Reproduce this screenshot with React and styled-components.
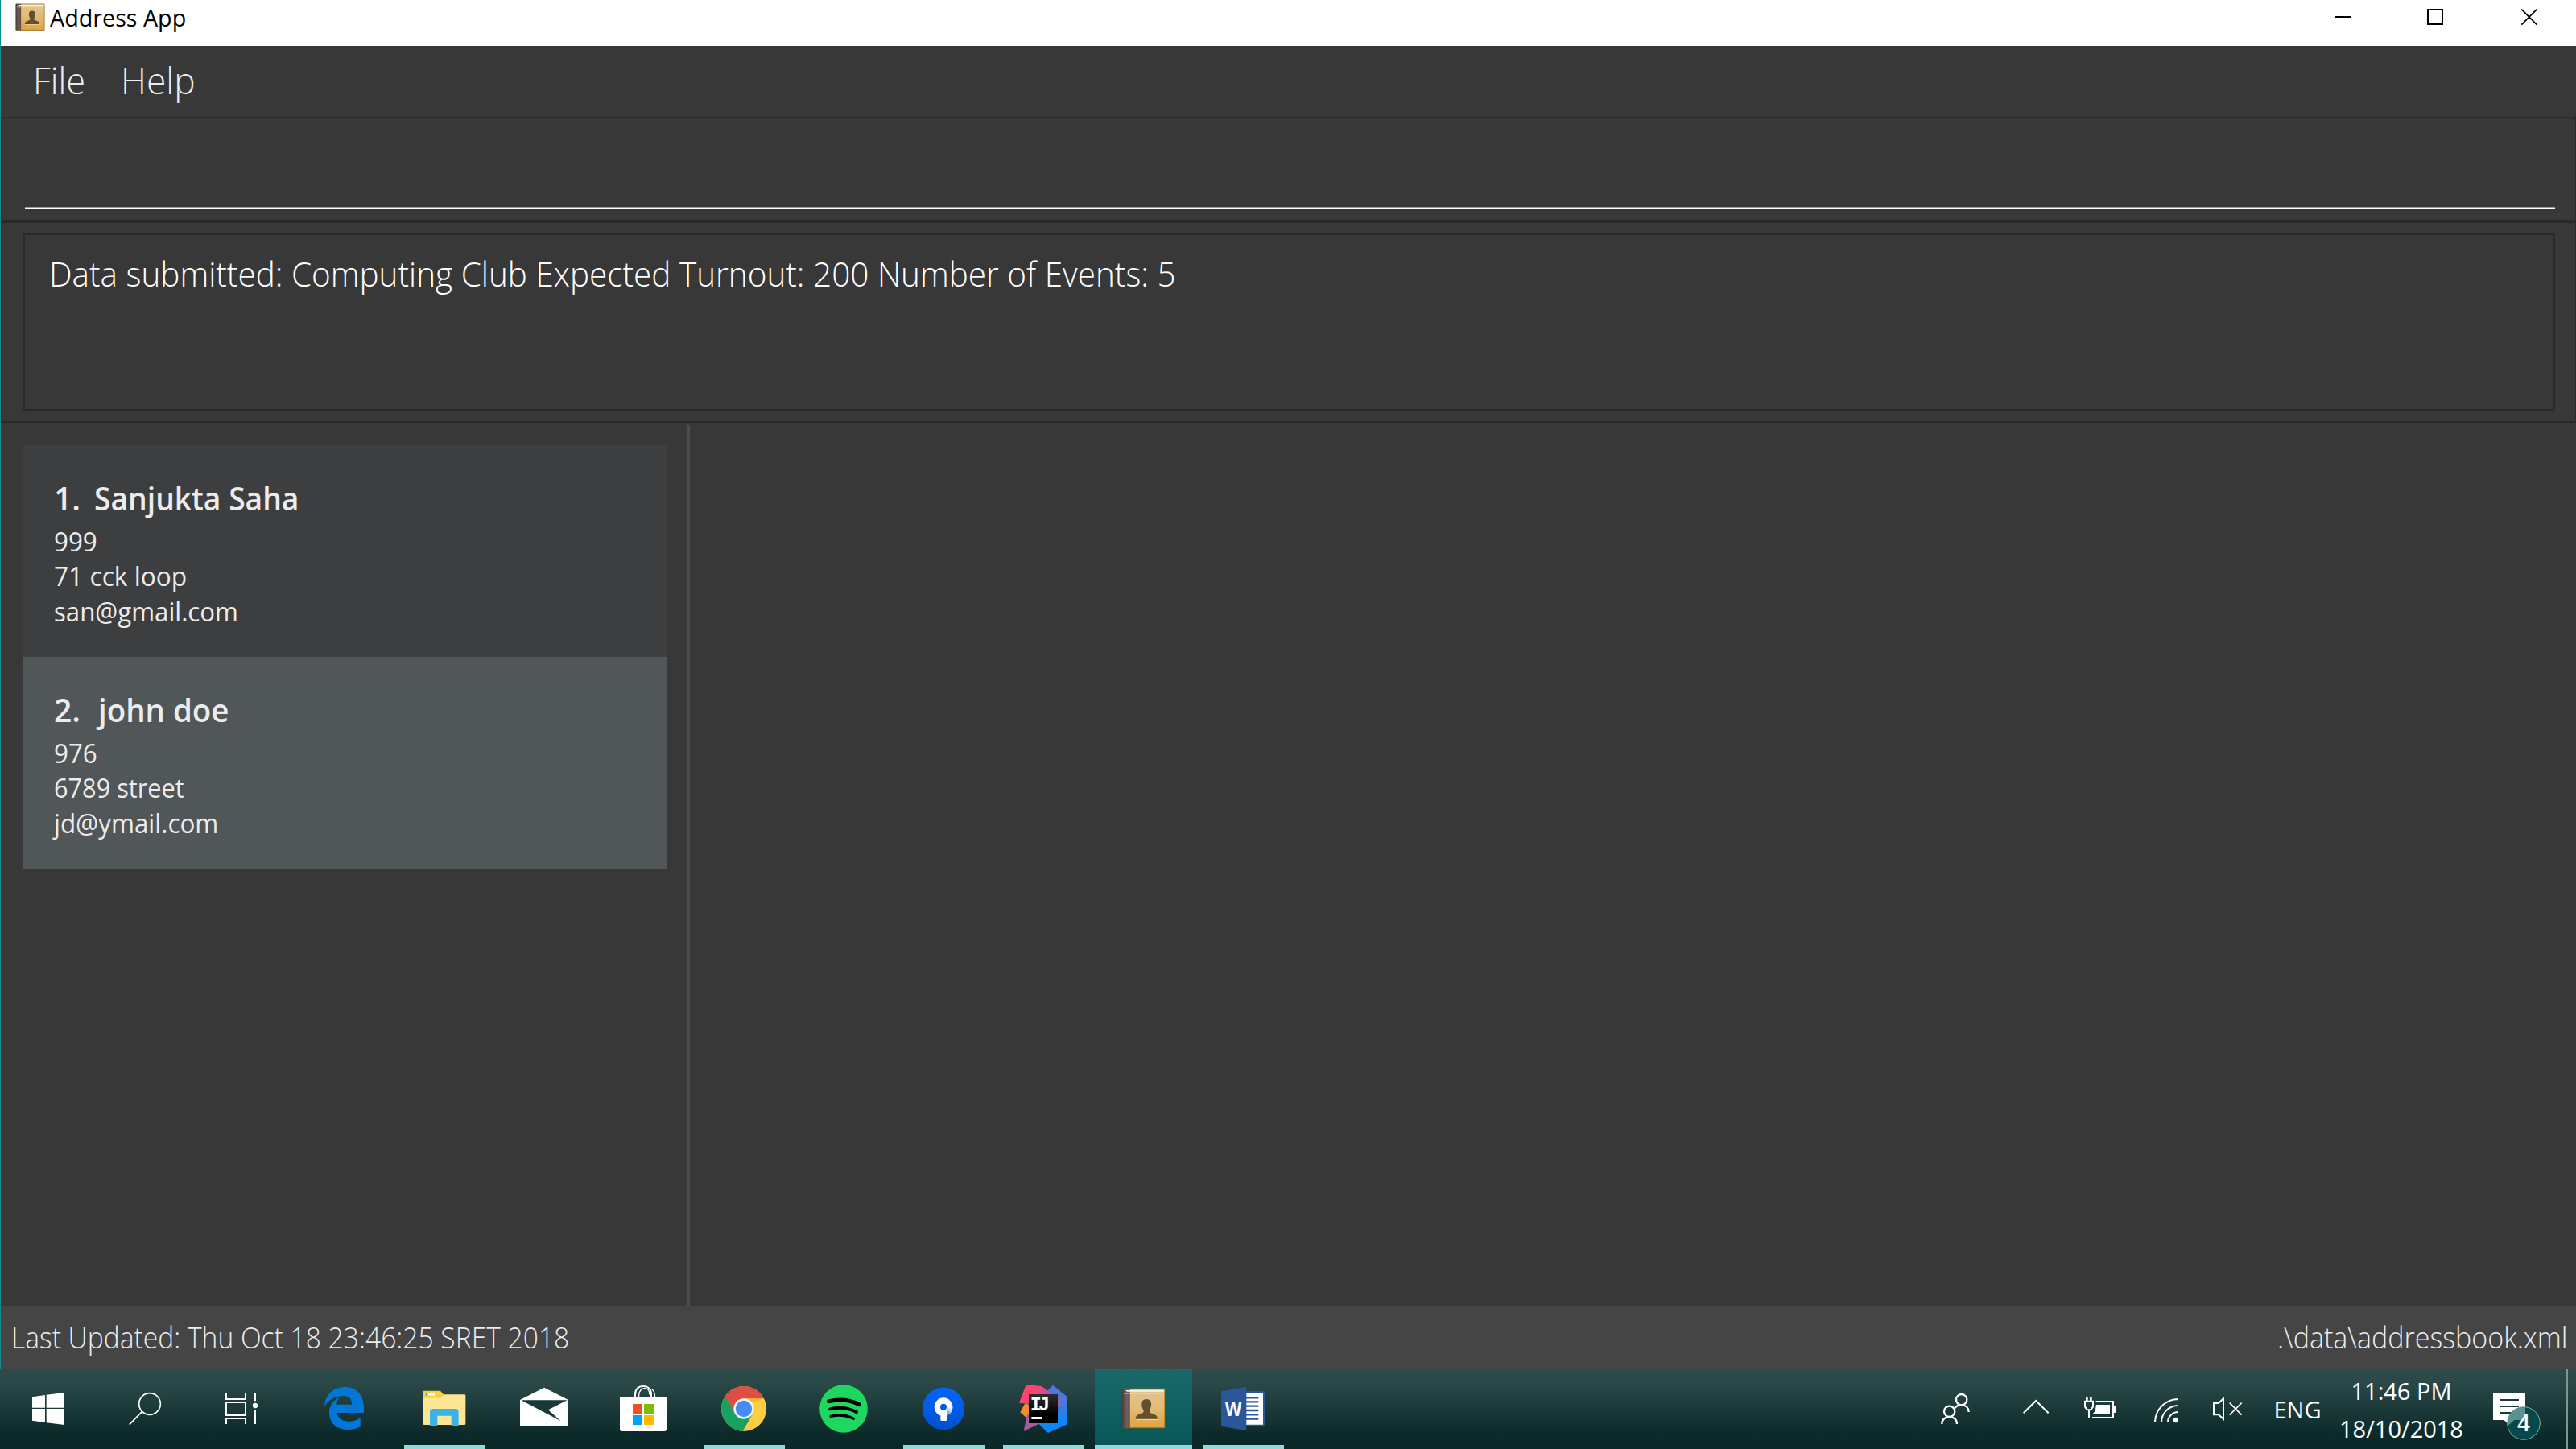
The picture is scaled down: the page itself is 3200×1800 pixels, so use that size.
import React from "react";
import styled, { createGlobalStyle } from "styled-components";

const GlobalStyle = createGlobalStyle`
  * { box-sizing: border-box; }
  body { margin: 0; background: #383838; overflow: hidden; font-family: "Open Sans", "Noto Sans", sans-serif; }
  svg { display: block; }
`;

const Screen = styled.div`
  width: 3200px;
  height: 1800px;
  display: flex;
  flex-direction: column;
`;
const Window = styled.div`
  height: 1700px;
  border-left: 1px solid #138a8c;
  background: #383838;
  display: flex;
  flex-direction: column;
`;
const TitleBar = styled.header`
  height: 57px;
  flex-shrink: 0;
  background: #fff;
  display: flex;
  align-items: flex-start;
  justify-content: space-between;
`;
const TitleGroup = styled.div`
  display: flex;
  padding: 4px 0 0 18px;
  gap: 6px;
`;
const Text = styled.span`
  display: block;
  white-space: pre;
  font-size: ${(p) => p.$size}px;
  line-height: ${(p) => p.$line}px;
  font-weight: ${(p) => p.$weight || 400};
  color: ${(p) => p.$color || "#fff"};
  transform: ${(p) => (p.$squeeze ? `scaleX(${p.$squeeze})` : "none")};
  transform-origin: ${(p) => p.$origin || "left"} center;
`;
const WindowButtons = styled.div`
  display: flex;
`;
const MenuBar = styled.nav`
  height: 88px;
  flex-shrink: 0;
  display: flex;
  gap: 40px;
  padding: 12px 0 0 40px;
`;
const Pane = styled.section`
  height: ${(p) => p.$height}px;
  flex-shrink: 0;
  border: 2px solid #292929;
  border-right-width: 1px;
  padding: ${(p) => p.$pad};
`;
const CommandField = styled.div`
  height: 113px;
  border-bottom: 2px solid #fff;
  box-shadow: inset 0 -1px #999;
`;
const ResultBox = styled.div`
  height: 220px;
  border: 2px solid #292929;
  padding: 18px 30px;
`;
const Main = styled.main`
  flex: 1;
  min-height: 0;
  display: flex;
`;
const ListPane = styled.aside`
  width: 853px;
  padding: 28px 25px 0 28px;
`;
const Divider = styled.div`
  width: 3px;
  margin-top: 3px;
  background: #4d4d4d;
`;
const Card = styled.article`
  height: 263px;
  padding: 39px 0 0 38px;
  background: ${(p) => (p.$alt ? "#515658" : "#3c3e3f")};
`;
const NameRow = styled.div`
  display: flex;
  gap: ${(p) => p.$gap}px;
  margin-bottom: 5px;
`;
const StatusBar = styled.footer`
  height: 78px;
  flex-shrink: 0;
  background: #454545;
  display: flex;
  justify-content: space-between;
  padding: 15px 11px 0 13px;
`;
const Taskbar = styled.div`
  height: 100px;
  background: linear-gradient(#2e4b4b 0%, #2a4747 22%, #1a3838 52%, #0d2b2b 80%, #0a2727 100%);
  display: flex;
  justify-content: space-between;
`;
const Group = styled.div`
  display: flex;
`;
const Slot = styled.div`
  width: ${(p) => p.$w}px;
  height: 100px;
  display: flex;
  flex-direction: column;
  align-items: center;
`;
const AppSlot = styled(Slot)`
  width: ${(p) => (p.$active ? 121 : 101)}px;
  margin: 0 ${(p) => (p.$active ? 1 : 11)}px 0 ${(p) => (p.$active ? 2 : 12)}px;
  border-bottom: 5px solid ${(p) => (p.$open ? "#8ed9da" : "transparent")};
  background: ${(p) => (p.$active ? "linear-gradient(#1b6969, #085757)" : "none")};
  background-clip: padding-box;
`;
const Apps = styled(Group)`
  padding-left: 6px;
`;
const BookHolder = styled.div`
  padding-top: 24px;
`;
const Clock = styled.div`
  width: 156px;
  display: flex;
  flex-direction: column;
  align-items: center;
  padding-top: 4px;
`;
const Lang = styled.div`
  width: 102px;
  display: flex;
  justify-content: center;
  padding-top: 30px;
`;
const ShowDesktop = styled.div`
  width: 13px;
  border-left: 3px solid #829495;
`;

const BookIcon = ({ w, h }) => (
  <svg width={w} height={h} viewBox="517 103 166 156">
    <defs>
      <linearGradient id="cover" x1="0" y1="0" x2="0" y2="1">
        <stop offset="0" stopColor="#e3c592" />
        <stop offset="0.5" stopColor="#e2bb76" />
        <stop offset="1" stopColor="#dda541" />
      </linearGradient>
      <linearGradient id="spine" x1="0" y1="0" x2="1" y2="0">
        <stop offset="0" stopColor="#4b3d3a" />
        <stop offset="0.6" stopColor="#75625e" />
        <stop offset="1" stopColor="#574743" />
      </linearGradient>
    </defs>
    <rect x="519" y="107" width="162" height="150" rx="5" fill="#3a2d17" opacity="0.4" />
    <rect x="520" y="105" width="160" height="149" rx="4" fill="#a87822" />
    <rect x="546" y="108" width="131" height="142" fill="url(#cover)" />
    <rect x="520" y="106" width="29" height="147" rx="4" fill="url(#spine)" />
    <path d="M532 112H676V117H538Z" fill="#f6f1e6" />
    <path d="M526 122H676V126H526Z" fill="#f2dfbd" opacity="0.6" />
    <path d="M572 221H652" stroke="#f3dcae" strokeWidth="3" />
    <path d="M570 219C570 204 582 202 598 196C601 192 600 187 597 182C592 172 592 162 595 153C600 142 621 142 626 153C630 162 629 173 624 182C621 188 621 192 624 196C640 202 652 204 652 219Z" fill="#61502f" />
  </svg>
);

const TaskIcon = ({ x, w, children }) => (
  <svg width={w / 3} height="100" viewBox={`${x} 30 ${w} 300`} overflow="visible">
    {children}
  </svg>
);

const StartIcon = () => (
  <TaskIcon x={0} w={360}>
    <path d="M120 136L168 129V176H120ZM173 128L240 120V176H173ZM120 180H168V231L120 224ZM173 180H240V240L173 232Z" fill="#fff" />
  </TaskIcon>
);
const SearchIcon = () => (
  <TaskIcon x={360} w={360}>
    <g fill="none" stroke="#fff" strokeWidth="5">
      <circle cx="558" cy="162" r="40" />
      <path d="M530 190L482 239" />
    </g>
  </TaskIcon>
);
const TaskViewIcon = () => (
  <TaskIcon x={720} w={360}>
    <g fill="none" stroke="#fff" strokeWidth="6">
      <path d="M843 123V144H915V123M843 156H915V204H843ZM843 237V216H915V237M951 123V151M951 184V237" />
    </g>
    <circle cx="951" cy="168" r="9.5" fill="#fff" />
  </TaskIcon>
);
const EdgeIcon = () => (
  <TaskIcon x={54} w={303}>
    <path d="M129 170C133 130 160 99 207 99C250 99 276 133 276 172V195H176C178 216 197 227 222 227C240 227 254 220 263 213V247C250 254 234 258 215 258C172 258 147 230 147 195C147 170 160 150 184 138C177 146 175 155 175 164H231C232 145 222 132 200 132C170 132 145 145 129 170Z" fill="#0178d9" />
  </TaskIcon>
);
const ExplorerIcon = () => (
  <TaskIcon x={426} w={303}>
    <path d="M500 127H651Q655 127 655 131V236Q655 240 651 240H501Q497 240 497 236V131Z" fill="#ffe693" />
    <path d="M501 113H558Q562 113 564 116L574 128L564 138Q562 140 558 140H497V117Q497 113 501 113Z" fill="#ffce3d" />
    <rect x="507" y="123" width="33" height="8" fill="#fff" />
    <rect x="507" y="123" width="7" height="8" fill="#1ea0e0" />
    <path d="M522 245V191Q522 180 533 180H618Q629 180 629 191V245H602V206H550V245Z" fill="#39b3e8" />
  </TaskIcon>
);
const MailIcon = () => (
  <TaskIcon x={798} w={303}>
    <path d="M858 147L948 101L1038 147V243H858Z" fill="#fff" />
    <path d="M862 148H1034L963 184L1010 226Z" fill="#1a3838" />
  </TaskIcon>
);
const StoreIcon = () => (
  <TaskIcon x={1170} w={303}>
    <g fill="none" stroke="#fff">
      <path d="M1287 140V128C1287 106 1300 96 1317 96C1336 96 1347 108 1347 126V140" strokeWidth="6" />
      <path d="M1301 140V128C1302 112 1312 104 1322 104C1336 104 1341 116 1341 128M1350 108C1358 114 1361 124 1361 140" strokeWidth="4" />
    </g>
    <path d="M1230 138H1404V256Q1404 264 1396 264H1238Q1230 264 1230 256Z" fill="#fff" />
    <path d="M1278 162h36v36h-36z" fill="#f44f24" />
    <path d="M1320 162h36v36h-36z" fill="#80ba01" />
    <path d="M1278 204h36v36h-36z" fill="#02a4f0" />
    <path d="M1320 204h36v36h-36z" fill="#ffb902" />
  </TaskIcon>
);
const ChromeIcon = () => (
  <TaskIcon x={102} w={303}>
    <circle cx="252" cy="180" r="84" fill="#ffcd42" />
    <path d="M182 134A84 84 0 0 0 248 264L288 194L252 180Z" fill="#1aa05f" />
    <path d="M182 134A84 84 0 0 1 327 142H252L216 192Z" fill="#dd4f43" />
    <path d="M252 142H327L284 154Z" fill="#e9ae30" opacity="0.7" />
    <circle cx="252" cy="180" r="38" fill="#f2f4f6" />
    <circle cx="252" cy="180" r="30.5" fill="#4a8af4" />
  </TaskIcon>
);
const SpotifyIcon = () => (
  <TaskIcon x={474} w={303}>
    <circle cx="624" cy="180" r="89.5" fill="#1ed760" />
    <g fill="none" stroke="#000" strokeLinecap="round">
      <path d="M569 152Q630 138 682 164" strokeWidth="15" />
      <path d="M573 181Q625 167 672 192" strokeWidth="12" />
      <path d="M576 208Q620 197 661 217" strokeWidth="10" />
    </g>
  </TaskIcon>
);
const SourcetreeIcon = () => (
  <TaskIcon x={846} w={303}>
    <defs>
      <linearGradient id="stbg" x1="0" y1="0" x2="0" y2="1">
        <stop offset="0" stopColor="#0065ff" />
        <stop offset="1" stopColor="#0250cc" />
      </linearGradient>
      <linearGradient id="stfade" x1="0" y1="1" x2="0.6" y2="0">
        <stop offset="0" stopColor="#3f83ea" />
        <stop offset="1" stopColor="#fff" />
      </linearGradient>
    </defs>
    <circle cx="996" cy="180" r="78.5" fill="url(#stbg)" />
    <circle cx="996" cy="173" r="23" fill="none" stroke="#fff" strokeWidth="22" />
    <path d="M1008 173H1030C1030 190 1022 200 1008 205V184Z" fill="url(#stfade)" />
    <path d="M985 192H1008V221Q1008 225 1004 225H989Q985 225 985 221Z" fill="#fff" />
  </TaskIcon>
);
const IdeaIcon = () => (
  <TaskIcon x={78} w={303}>
    <defs>
      <linearGradient id="ijblue" x1="0.3" y1="0" x2="0.5" y2="1">
        <stop offset="0" stopColor="#5a72d8" />
        <stop offset="0.45" stopColor="#4a78dc" />
        <stop offset="0.8" stopColor="#0e86fb" />
      </linearGradient>
      <linearGradient id="ijpink" x1="0" y1="0" x2="1" y2="0.5">
        <stop offset="0.3" stopColor="#fe4370" />
        <stop offset="1" stopColor="#7a68c4" />
      </linearGradient>
      <linearGradient id="ijblack" x1="0" y1="0" x2="0" y2="1">
        <stop offset="0" stopColor="#2c2c2c" />
        <stop offset="0.7" stopColor="#000" />
      </linearGradient>
    </defs>
    <path d="M160 160L142 193L175 222L190 170Z" fill="#f68c2c" />
    <path d="M168 200L155 264L222 232Z" fill="#a95aa0" />
    <path d="M164 90L221 96L306 152L240 220L200 165L138 158Z" fill="url(#ijpink)" />
    <path d="M264 92L318 136L315 239L246 270L206 232L282 180L300 152L244 112Z" fill="url(#ijblue)" />
    <path d="M174 126H282V234H174Z" fill="url(#ijblack)" />
    <path d="M184 210H224V219H184Z" fill="#fff" />
    <text x="179" y="186" fontFamily="Liberation Mono, monospace" fontWeight="700" fontSize="70" letterSpacing="-11" fill="#fff">IJ</text>
  </TaskIcon>
);
const WordIcon = () => (
  <TaskIcon x={822} w={303}>
    <rect x="960" y="114" width="93" height="131" rx="7" fill="#2b579a" />
    <path d="M970 121H1047V239H970Z" fill="#fff" />
    <path d="M984 139H1030M984 154H1030M984 170H1030M984 186H1030M984 202H1030M984 218H1030" stroke="#2b579a" strokeWidth="7" />
    <path d="M891 115L985 98V262L891 245Z" fill="#2a569a" />
    <text x="905" y="207" fontFamily="Open Sans, sans-serif" fontWeight="700" fontSize="76" textLength="62" lengthAdjust="spacingAndGlyphs" fill="#fff">W</text>
  </TaskIcon>
);
const PeopleIcon = () => (
  <TaskIcon x={27} w={300}>
    <g fill="none" stroke="#fff" strokeWidth="7">
      <circle cx="170" cy="146" r="20" />
      <circle cx="125" cy="190" r="20" />
      <path d="M97 237C97 220 109 210 125 210C141 210 153 220 153 237M143 180C148 171 158 166 170 166C187 166 197 177 197 192" />
    </g>
  </TaskIcon>
);
const ChevronIcon = () => (
  <TaskIcon x={327} w={240}>
    <path d="M401 196L447.5 150L494 196" fill="none" stroke="#fff" strokeWidth="6" />
  </TaskIcon>
);
const BatteryIcon = () => (
  <TaskIcon x={567} w={240}>
    <g fill="none" stroke="#fff" strokeWidth="6">
      <path d="M671 153H735V213H657M645 184V216" />
      <path d="M630 152H660V172L652 184H638L630 172Z" />
    </g>
    <path d="M672 165H723V201H657L668 188ZM738 171H747V195H738Z" fill="#fff" />
    <path d="M633 135H641V150H633ZM648 135H656V150H648Z" fill="#fff" />
  </TaskIcon>
);
const WifiIcon = () => (
  <TaskIcon x={807} w={240}>
    <g fill="none" stroke="#fff" strokeWidth="6">
      <path d="M891 231C891 183 930 144 978 144M915 231C915 196 943 168 978 168M939 231C939 209 956 192 978 192" />
    </g>
    <circle cx="969" cy="222" r="9.5" fill="#fff" />
  </TaskIcon>
);
const VolumeIcon = () => (
  <TaskIcon x={1047} w={222}>
    <g fill="none" stroke="#fff" strokeWidth="6">
      <path d="M1110 159H1128L1146 142V218L1128 202H1110Z" />
      <path d="M1169 158L1214 203M1214 158L1169 203" strokeWidth="5" />
    </g>
  </TaskIcon>
);
const ActionCenterIcon = () => (
  <svg width="126" height="100" viewBox="843 270 378 300">
    <path d="M951 360H1071V462H1020V490L992 462H951Z" fill="#fff" />
    <path d="M975 387H1047M975 411H1047M975 435H1047" stroke="#1c3b3b" strokeWidth="6" />
    <clipPath id="bubble"><path d="M951 360H1071V462H1030L1008 482L992 462H951Z" /></clipPath>
    <circle cx="1065" cy="474" r="61" fill="#05494b" stroke="#8fa5a5" strokeWidth="3" />
    <circle cx="1065" cy="474" r="60" fill="#5c9192" clipPath="url(#bubble)" />
    <text x="1065" y="503" textAnchor="middle" fontFamily="Open Sans, sans-serif" fontWeight="600" fontSize="84" fill="#fff">4</text>
  </svg>
);

const MinimizeIcon = () => (
  <svg width="115" height="57" viewBox="0 0 345 171">
    <path d="M135 63H195" stroke="#000" strokeWidth="6" />
  </svg>
);
const MaximizeIcon = () => (
  <svg width="115" height="57" viewBox="0 0 345 171">
    <rect x="138" y="36" width="54" height="54" fill="none" stroke="#000" strokeWidth="6" />
  </svg>
);
const CloseIcon = () => (
  <svg width="115" height="57" viewBox="0 0 345 171">
    <path d="M142 35L199 92M199 35L142 92" stroke="#000" strokeWidth="5" />
  </svg>
);

const people = [
  {
    n: "1.",
    name: "Sanjukta Saha",
    gap: 17,
    squeeze: 0.955,
    lines: [["999", 0.95], ["71 cck loop", 0.96], ["san@gmail.com", 0.945]],
  },
  {
    n: "2.",
    name: "john doe",
    gap: 22,
    squeeze: 0.985,
    lines: [["976", 0.95], ["6789 street", 0.93], ["jd@ymail.com", 0.95]],
  },
];

const apps = [
  { id: "edge", Icon: EdgeIcon },
  { id: "explorer", Icon: ExplorerIcon, open: true },
  { id: "mail", Icon: MailIcon },
  { id: "store", Icon: StoreIcon },
  { id: "chrome", Icon: ChromeIcon, open: true },
  { id: "spotify", Icon: SpotifyIcon },
  { id: "sourcetree", Icon: SourcetreeIcon, open: true },
  { id: "idea", Icon: IdeaIcon, open: true },
  { id: "book", Icon: null, open: true, active: true },
  { id: "word", Icon: WordIcon, open: true },
];

export default function App() {
  return (
    <Screen>
      <GlobalStyle />
      <Window>
        <TitleBar>
          <TitleGroup>
            <BookIcon w={37} h={35} />
            <Text $size={29} $line={36} $color="#000" $squeeze={0.99}>Address App</Text>
          </TitleGroup>
          <WindowButtons>
            <MinimizeIcon />
            <MaximizeIcon />
            <CloseIcon />
          </WindowButtons>
        </TitleBar>
        <MenuBar>
          <Text $size={46} $line={60} $weight={300} $color="#ececec" $squeeze={0.94}>File</Text>
          <Text $size={46} $line={60} $weight={300} $color="#ececec" $squeeze={0.965}>Help</Text>
        </MenuBar>
        <Pane $height={130} $pad="0 25px 0 28px">
          <CommandField />
        </Pane>
        <Pane $height={250} $pad="13px 25px 0 26px">
          <ResultBox>
            <Text $size={43} $line={60} $weight={300} $squeeze={0.9415}>Data submitted: Computing Club Expected Turnout: 200 Number of Events: 5</Text>
          </ResultBox>
        </Pane>
        <Main>
          <ListPane>
            {people.map((p, i) => (
              <Card key={p.n} $alt={i % 2 === 1}>
                <NameRow $gap={p.gap}>
                  <Text $size={39} $line={54} $weight={600} $color="#ececec">{p.n}</Text>
                  <Text $size={39} $line={54} $weight={600} $color="#ececec" $squeeze={p.squeeze}>{p.name}</Text>
                </NameRow>
                {p.lines.map(([line, squeeze]) => (
                  <Text key={line} $size={33} $line={43.3} $color="#ececec" $squeeze={squeeze}>{line}</Text>
                ))}
              </Card>
            ))}
          </ListPane>
          <Divider />
        </Main>
        <StatusBar>
          <Text $size={36} $line={50} $weight={300} $color="#ececec" $squeeze={0.933}>Last Updated: Thu Oct 18 23:46:25 SRET 2018</Text>
          <Text $size={36} $line={50} $weight={300} $color="#ececec" $squeeze={0.945} $origin="right">.\data\addressbook.xml</Text>
        </StatusBar>
      </Window>
      <Taskbar>
        <Group>
          <Slot $w={120}><StartIcon /></Slot>
          <Slot $w={120}><SearchIcon /></Slot>
          <Slot $w={120}><TaskViewIcon /></Slot>
          <Apps>
            {apps.map(({ id, Icon, open, active }) => (
              <AppSlot key={id} $open={open} $active={active}>
                {Icon ? <Icon /> : <BookHolder><BookIcon w={55.3} h={52} /></BookHolder>}
              </AppSlot>
            ))}
          </Apps>
        </Group>
        <Group>
          <Slot $w={100}><PeopleIcon /></Slot>
          <Slot $w={80}><ChevronIcon /></Slot>
          <Slot $w={80}><BatteryIcon /></Slot>
          <Slot $w={80}><WifiIcon /></Slot>
          <Slot $w={74}><VolumeIcon /></Slot>
          <Lang><Text $size={29} $line={42}>ENG</Text></Lang>
          <Clock>
            <Text $size={29} $line={47}>11:46 PM</Text>
            <Text $size={29} $line={47}>18/10/2018</Text>
          </Clock>
          <Slot $w={126}><ActionCenterIcon /></Slot>
          <ShowDesktop />
        </Group>
      </Taskbar>
    </Screen>
  );
}
